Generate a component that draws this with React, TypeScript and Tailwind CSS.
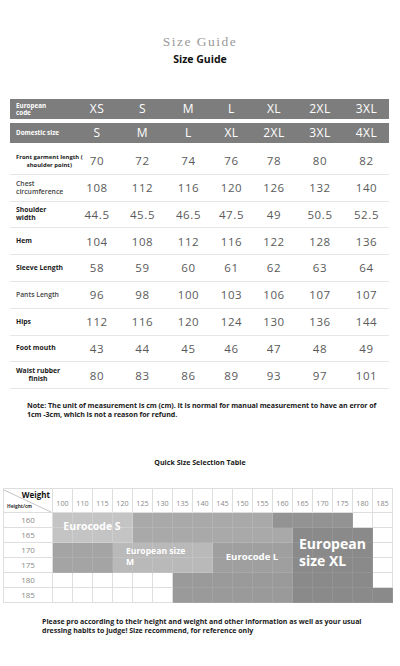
import React from 'react';

type Row = {
  lines: string[];
  align: 'left' | 'center';
  tone: 'bold' | 'soft';
  small?: boolean;
  vals: string[];
};

const euro = ['XS', 'S', 'M', 'L', 'XL', '2XL', '3XL'];
const domestic = ['S', 'M', 'L', 'XL', '2XL', '3XL', '4XL'];

const rows: Row[] = [
  { lines: ['Front garment length (', 'shoulder point)'], align: 'center', tone: 'bold', small: true, vals: ['70', '72', '74', '76', '78', '80', '82'] },
  { lines: ['Chest', 'circumference'], align: 'left', tone: 'soft', vals: ['108', '112', '116', '120', '126', '132', '140'] },
  { lines: ['Shoulder', 'width'], align: 'left', tone: 'bold', vals: ['44.5', '45.5', '46.5', '47.5', '49', '50.5', '52.5'] },
  { lines: ['Hem'], align: 'left', tone: 'bold', vals: ['104', '108', '112', '116', '122', '128', '136'] },
  { lines: ['Sleeve Length'], align: 'left', tone: 'bold', vals: ['58', '59', '60', '61', '62', '63', '64'] },
  { lines: ['Pants Length'], align: 'left', tone: 'soft', vals: ['96', '98', '100', '103', '106', '107', '107'] },
  { lines: ['Hips'], align: 'left', tone: 'bold', vals: ['112', '116', '120', '124', '130', '136', '144'] },
  { lines: ['Foot mouth'], align: 'left', tone: 'bold', vals: ['43', '44', '45', '46', '47', '48', '49'] },
  { lines: ['Waist rubber', 'finish'], align: 'center', tone: 'bold', vals: ['80', '83', '86', '89', '93', '97', '101'] }
];

const weights = ['100', '110', '115', '120', '125', '130', '135', '140', '145', '150', '155', '160', '165', '170', '175', '180', '185'];
const heights = ['160', '165', '170', '175', '180', '185'];

// one letter per weight column
const fillMap = [
  'SSSSAAAAAAADDDDWW',
  'SSSSAAAAAAAAXXXXW',
  'BBBMMMMMLLLLXXXXW',
  'BBBMMMMMLLLLXXXXW',
  'WWWWWWKKKKKKXXXXW',
  'WWWWWWKKKKKKXXXXX'
];

const fills: Record<string, string> = {
  W: 'bg-white border-[#dedede]',
  S: 'bg-[#c4c4c4] border-[#cfcfcf]',
  A: 'bg-[#a9a9a9] border-[#b3b3b3]',
  D: 'bg-[#939393] border-[#9c9c9c]',
  M: 'bg-[#b9b9b9] border-[#c2c2c2]',
  B: 'bg-[#a4a4a4] border-[#adadad]',
  L: 'bg-[#9f9f9f] border-[#a8a8a8]',
  K: 'bg-[#9a9a9a] border-[#a3a3a3]',
  X: 'bg-[#8a8a8a] border-[#939393]'
};

const sizeCols = 'grid grid-cols-[65px_44px_47px_45px_41px_44px_48px_45px]';

function SizeBar({ label, values }: { label: string[]; values: string[] }) {
  return (
    <div className={`${sizeCols} h-[20px] items-center bg-[#7d7d7d] text-white`}>
      <div className="pl-[6px] text-[6.3px] font-bold leading-[7.5px]">
        {label.map((l) => (
          <div key={l}>{l}</div>
        ))}
      </div>
      {values.map((v, i) => (
        <div key={i} className="text-center text-[12px] tracking-[0.5px]">
          {v}
        </div>
      ))}
    </div>
  );
}

export default function App() {
  return (
    <div className="relative h-[666px] w-[400px] overflow-hidden bg-white font-['Open_Sans',sans-serif] text-[#222]">
      <div className="pt-[33px] text-center">
        <div className="font-['Liberation_Serif',serif] text-[13.5px] leading-[18px] tracking-[1.5px] text-[#9a9a9a]">
          Size Guide
        </div>
        <div className="mt-[1px] text-[10.5px] font-bold leading-[14px] text-[#111]">Size Guide</div>
      </div>

      <div className="mx-[10px] mt-[33px] w-[379px]">
        <SizeBar label={['European', 'code']} values={euro} />
        <div className="mt-[4px]">
          <SizeBar label={['Domestic size']} values={domestic} />
        </div>

        <div className="mt-[5px]">
          {rows.map((row, idx) => (
            <div
              key={idx}
              className={`${sizeCols} h-[26.8px] items-center border-b border-[#e6e6e6]`}
            >
              <div className="pl-[6px]">
                <div
                  className={`whitespace-nowrap ${row.small ? 'text-[5.9px] leading-[7.5px]' : 'text-[6.8px] leading-[8px]'} ${
                    row.align === 'center' ? 'inline-block text-center' : 'text-left'
                  } ${row.tone === 'bold' ? 'font-bold text-[#1a1a1a]' : 'font-semibold text-[#444]'}`}
                >
                  {row.lines.map((l) => (
                    <div key={l}>{l}</div>
                  ))}
                </div>
              </div>
              {row.vals.map((v, i) => (
                <div key={i} className="text-center text-[11.5px] tracking-[0.6px] text-[#5a5a5a]">
                  {v}
                </div>
              ))}
            </div>
          ))}
        </div>
      </div>

      <div className="mt-[12px] whitespace-nowrap pl-[27px] text-[7.1px] font-bold leading-[9px] tracking-[-0.05px] text-[#1a1a1a]">
        <div>Note: The unit of measurement is cm (cm). It is normal for manual measurement to have an error of</div>
        <div>1cm -3cm, which is not a reason for refund.</div>
      </div>

      <div className="mt-[38px] text-center text-[7.1px] font-bold leading-[10px] text-[#1a1a1a]">
        Quick Size Selection Table
      </div>

      <div className="relative ml-[3px] mt-[21px] w-[390px]">
        <div className="grid grid-cols-[49px_repeat(17,20px)] border-l border-t border-[#dedede]">
          <div className="relative h-[24px] border-b border-r border-[#dedede]">
            <svg className="absolute inset-0" width="49" height="24" viewBox="0 0 49 24">
              <line x1="0" y1="1" x2="47" y2="23" stroke="#b5b5b5" strokeWidth="0.8" />
            </svg>
            <div className="absolute right-[2px] top-[1px] text-[8px] font-bold leading-[10px] text-[#111]">Weight</div>
            <div className="absolute left-[3px] top-[14px] text-[4.8px] font-bold leading-[6px] text-[#333]">Height/cm</div>
          </div>
          {weights.map((w) => (
            <div
              key={w}
              className="flex h-[24px] items-end justify-center border-b border-r border-[#dedede] pb-[4px] text-[7.2px] leading-[9px] text-[#8a8a8a]"
            >
              {w}
            </div>
          ))}
          {heights.map((h, r) => (
            <React.Fragment key={h}>
              <div className="flex h-[15px] items-center justify-center border-b border-r border-[#dedede] text-[8px] text-[#8a8a8a]">
                {h}
              </div>
              {fillMap[r].split('').map((c, i) => (
                <div key={i} className={`h-[15px] border-b border-r ${fills[c]}`} />
              ))}
            </React.Fragment>
          ))}
        </div>

        <div className="absolute left-[49px] top-[24px] flex h-[30px] w-[80px] items-center justify-center text-[10.5px] font-bold text-white">
          Eurocode S
        </div>
        <div className="absolute left-[123px] top-[58px] text-[8.6px] font-bold leading-[11px] text-white">
          <div>European size</div>
          <div>M</div>
        </div>
        <div className="absolute left-[214px] top-[54px] flex h-[30px] w-[70px] items-center justify-center text-[9.6px] font-bold text-white">
          Eurocode L
        </div>
        <div className="absolute left-[296px] top-[47px] text-[14px] font-bold leading-[17px] text-white">
          <div>European</div>
          <div>size XL</div>
        </div>
      </div>

      <div className="mt-[14px] whitespace-nowrap pl-[42px] text-[7px] font-bold leading-[9px] text-[#1a1a1a]">
        <div>Please pro according to their height and weight and other information as well as your usual</div>
        <div>dressing habits to judge! Size recommend, for reference only</div>
      </div>
    </div>
  );
}
